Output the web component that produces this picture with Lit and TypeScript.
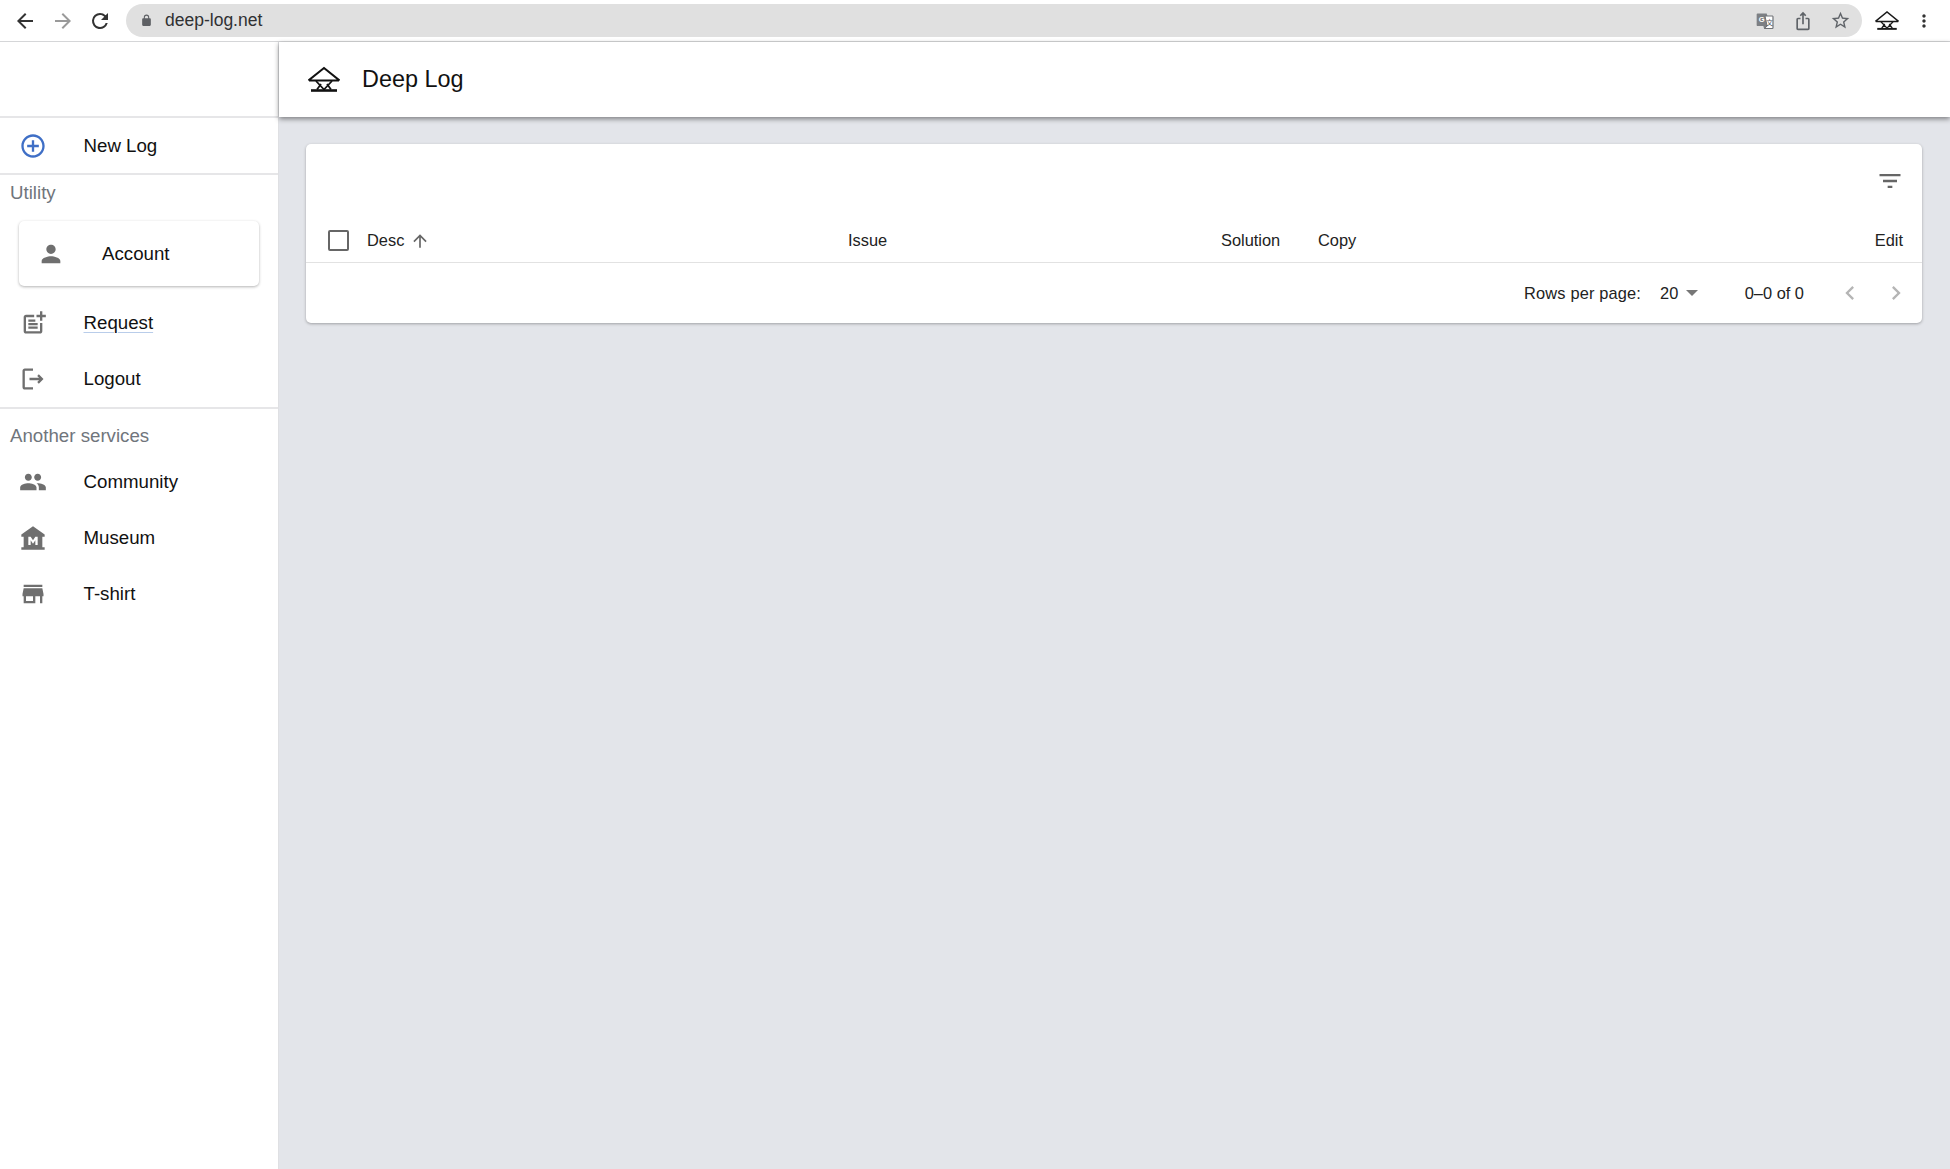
import { LitElement, html, css, svg } from "lit";
import { customElement } from "lit/decorators.js";

const logo = svg`<path d="M.5 17.500 L16 5 L31.500 17.500 M1 17.500 H31" fill="none" stroke="currentColor" stroke-width="2"/><path d="M8 18 L16 26.500 L24 18 M9 26.500 L13 21 M23 26.500 L19 21" fill="none" stroke="currentColor" stroke-width="1.800"/><path d="M3 27.500 H29" stroke="currentColor" stroke-width="2.600"/>`;

const ic = (body: unknown, size = 28, vb = "0 0 24 24") =>
  html`<svg width=${size} height=${size} viewBox=${vb} fill="currentColor">${body}</svg>`;

const icons = {
  plus: svg`<path d="M13 7h-2v4H7v2h4v4h2v-4h4v-2h-4V7zm-1-5C6.490 2 2 6.490 2 12s4.490 10 10 10 10-4.490 10-10S17.510 2 12 2zm0 18c-4.410 0-8-3.590-8-8s3.590-8 8-8 8 3.590 8 8-3.590 8-8 8z"/>`,
  person: svg`<path d="M12 12c2.210 0 4-1.790 4-4s-1.790-4-4-4-4 1.790-4 4 1.790 4 4 4zm0 2c-2.670 0-8 1.340-8 4v2h16v-2c0-2.660-5.330-4-8-4z"/>`,
  request: svg`<path d="M18 19H6V7h7V5H6c-1.100 0-2 .9-2 2v12c0 1.100.9 2 2 2h12c1.100 0 2-.9 2-2v-7h-2v7zM20 5V2h-2v3h-3v2h3v3h2V7h3V5h-3zM8 9h6v2H8V9zm0 3h8v2H8v-2zm0 3h8v2H8v-2z"/>`,
  logout: svg`<path d="M5 5h7V3H5c-1.100 0-2 .9-2 2v14c0 1.100.9 2 2 2h7v-2H5V5zm16 7-4-4-1.400 1.400 1.600 1.600H9v2h8.200l-1.600 1.600L17 16l4-4z"/>`,
  people: svg`<path d="M16 11c1.660 0 2.990-1.340 2.990-3S17.660 5 16 5s-3 1.340-3 3 1.340 3 3 3zm-8 0c1.660 0 2.990-1.340 2.990-3S9.660 5 8 5 5 6.340 5 8s1.340 3 3 3zm0 2c-2.330 0-7 1.170-7 3.500V19h14v-2.500C15 14.170 10.330 13 8 13zm8 0c-.29 0-.62.020-.97.050C16.190 13.890 17 15.020 17 16.500V19h6v-2.500c0-2.330-4.670-3.500-7-3.500z"/>`,
  museum: svg`<path fill-rule="evenodd" d="M22 11V9L12 2 2 9v2h2v9H2v2h20v-2h-2v-9h2zM16 18h-2v-4l-2 3-2-3v4H8v-7h2l2 3 2-3h2v7z"/>`,
  store: svg`<path fill-rule="evenodd" d="M20 4H4v2h16V4zm1 10v-2l-1-5H4l-1 5v2h1v6h10v-6h4v6h2v-6h1zm-9 4H6v-4h6v4z"/>`,
  sort: svg`<path d="M4 12l1.410 1.410L11 7.830V20h2V7.830l5.580 5.590L20 12l-8-8-8 8z"/>`,
  filter: svg`<path d="M10 18h4v-2h-4v2zM3 6v2h18V6H3zm3 7h12v-2H6v2z"/>`,
  left: svg`<path d="M15.410 7.410 14 6l-6 6 6 6 1.410-1.410L10.830 12z"/>`,
  right: svg`<path d="M10 6 8.590 7.410 13.170 12l-4.580 4.590L10 18l6-6z"/>`,
  back: svg`<path d="M20 11H7.830l5.590-5.590L12 4l-8 8 8 8 1.410-1.410L7.830 13H20v-2z"/>`,
  fwd: svg`<path d="M12 4l-1.410 1.410L16.170 11H4v2h12.170l-5.580 5.590L12 20l8-8z"/>`,
  reload: svg`<path d="M17.650 6.350A7.960 7.960 0 0 0 12 4a8 8 0 1 0 7.740 10h-2.080A6 6 0 1 1 12 6c1.660 0 3.140.69 4.220 1.780L13 11h7V4l-2.350 2.350z"/>`,
  lock: svg`<path d="M18 8h-1V6a5 5 0 0 0-10 0v2H6c-1.100 0-2 .9-2 2v10c0 1.100.9 2 2 2h12c1.100 0 2-.9 2-2V10c0-1.100-.9-2-2-2zM9 8V6a3 3 0 0 1 6 0v2H9z"/>`,
  share: svg`<path d="M16 5l-1.420 1.420-1.590-1.590V16h-1.980V4.830L9.420 6.420 8 5l4-4 4 4zm4 5v11c0 1.100-.9 2-2 2H6c-1.110 0-2-.9-2-2V10c0-1.110.89-2 2-2h3v2H6v11h12V10h-3V8h3c1.100 0 2 .89 2 2z"/>`,
  star: svg`<path d="M22 9.240l-7.190-.62L12 2 9.190 8.630 2 9.240l5.460 4.730L5.820 21 12 17.270 18.180 21l-1.630-7.030L22 9.240zM12 15.400l-3.760 2.270 1-4.280-3.320-2.880 4.380-.38L12 6.100l1.710 4.040 4.380.38-3.320 2.880 1 4.280L12 15.400z"/>`,
  dots: svg`<path d="M12 8c1.100 0 2-.9 2-2s-.9-2-2-2-2 .9-2 2 .9 2 2 2zm0 2c-1.100 0-2 .9-2 2s.9 2 2 2 2-.9 2-2-.9-2-2-2zm0 6c-1.100 0-2 .9-2 2s.9 2 2 2 2-.9 2-2-.9-2-2-2z"/>`,
  translate: svg`<path d="M3 3h11l1 3h5.500c.8 0 1.500.7 1.500 1.500V20c0 .8-.7 1.500-1.500 1.500H11L10 18H3c-.8 0-1-.6-1-1.200V4c0-.6.400-1 1-1z" fill="#7d8084"/><path d="M12 6h9.500v15H11.500L14.500 18z" fill="#fff" stroke="#6f7276" stroke-width="1.200"/><text x="8" y="13.500" font-size="9" font-weight="700" font-family="Liberation Sans" text-anchor="middle" fill="#fff">G</text><text x="17.500" y="17" font-size="8" font-family="Noto Sans CJK SC" text-anchor="middle" fill="#55585c">文</text>`,
};

@customElement("app-root")
export class AppRoot extends LitElement {
  static styles = css`
    :host { display: block; width: 1950px; height: 1169px; overflow: hidden; font-family: "Liberation Sans", Arial, sans-serif; background: #e3e5ea; color: #000; }
    svg { display: block; flex: none; }
    .browser { height: 41px; background: #fff; border-bottom: 1px solid #d5d6d8; display: flex; align-items: center; padding: 0 0 0 13px; }
    .nav { display: flex; align-items: center; gap: 13.500px; width: 113px; color: #333; }
    .nav .off { color: #9a9a9a; }
    .omni { width: 1736px; height: 33px; border-radius: 17px; background: #e0e0e0; display: flex; align-items: center; padding: 0 6px 0 14px; box-sizing: border-box; font-size: 17.500px; color: #303133; }
    .omni .lock { color: #5e6064; margin-right: 12px; }
    .omni .grow { flex: 1; }
    .omni .acts { display: flex; align-items: center; gap: 17.500px; color: #5f6368; margin-right: 5px; }
    .ext { display: flex; align-items: center; margin-left: 13px; gap: 15px; color: #1a1a1a; }
    .ext .dots { color: #333; }
    .main { display: flex; height: 1127px; }
    aside { width: 278px; flex: none; box-sizing: content-box; background: #fff; border-right: 1px solid #dfe0e3; }
    .top { height: 74px; border-bottom: 2px solid #e6e6e8; }
    .new { height: 55px; display: flex; align-items: center; padding-left: 19px; border-bottom: 2px solid #e6e6e8; font-size: 18.700px; color: #111; }
    .row { height: 56px; display: flex; align-items: center; padding-left: 19px; font-size: 18.700px; color: #111; }
    .new svg { color: #3f6fc6; }
    .row svg, .account svg { color: #6f6f6f; }
    .ico { width: 64.500px; flex: none; }
    .account .ico { width: 65px; }
    .sect { font-size: 18.700px; color: #70757c; padding-left: 10px; line-height: 36px; }
    .account { margin: 10px 19px 9px; height: 65px; border-radius: 5px; background: #fff; box-shadow: 0 1px 3px rgba(0,0,0,.3); display: flex; align-items: center; padding-left: 18px; font-size: 18.700px; color: #111; }
    .req { text-decoration: underline; text-decoration-color: #b9cdea; text-underline-offset: 3px; text-decoration-thickness: 1px; }
    .hr { height: 2px; background: #e6e6e8; }
    .another { padding-top: 8.500px; }
    .content { flex: 1; min-width: 0; display: flex; flex-direction: column; }
    header { height: 75px; background: #fff; display: flex; align-items: center; padding-left: 29px; font-size: 23.400px; color: #111; box-shadow: 0 2px 5px rgba(0,0,0,.45); position: relative; }
    header svg { margin-right: 22px; color: #111; }
    .card { margin: 27px 28px 0 27px; height: 179px; background: #fff; border-radius: 5px; box-shadow: 0 1px 3px rgba(0,0,0,.3); display: flex; flex-direction: column; font-size: 16.400px; color: #222; }
    .tool { flex: none; height: 74px; display: flex; justify-content: flex-end; align-items: center; padding-right: 18px; color: #666; }
    .thead { flex: none; height: 45px; padding-top: 1px; box-sizing: border-box; border-bottom: 1px solid #e2e2e2; display: grid; grid-template-columns: 61px 481px 373px 97px 1fr 60px; align-items: center; }
    .thead > div { display: flex; align-items: center; }
    .chk { width: 21px; height: 21px; border: 2px solid #666; border-radius: 2px; margin-left: 22px; box-sizing: border-box; }
    .desc svg { margin-left: 6px; color: #666; }
    .edit { justify-content: flex-end; padding-right: 19px; }
    .foot { flex: 1; display: flex; justify-content: flex-end; align-items: center; padding-right: 12px; }
    .foot .rows { letter-spacing: .150px; }
    .foot .n { margin-left: 19px; }
    .foot .caret { width: 0; height: 0; border-left: 6px solid transparent; border-right: 6px solid transparent; border-top: 6px solid #777; margin-left: 8px; }
    .foot .range { margin-left: 46.500px; margin-right: 32px; }
    .foot .pg { display: flex; gap: 18px; color: #b5b5b5; }
  `;

  private item(icon: unknown, label: string, cls = "") {
    return html`<div class="row"><div class="ico">${ic(icon, 28)}</div><span class=${cls}>${label}</span></div>`;
  }

  render() {
    return html`
      <div class="browser">
        <div class="nav">
          ${ic(icons.back, 24)}
          <span class="off">${ic(icons.fwd, 24)}</span>
          ${ic(icons.reload, 24)}
        </div>
        <div class="omni">
          <span class="lock">${ic(icons.lock, 13)}</span>
          <span>deep-log.net</span>
          <span class="grow"></span>
          <div class="acts">
            ${ic(icons.translate, 20)}
            ${ic(icons.share, 20)}
            ${ic(icons.star, 21)}
          </div>
        </div>
        <div class="ext">
          ${ic(logo, 24, "0 1 32 32")}
          <span class="dots">${ic(icons.dots, 20)}</span>
        </div>
      </div>
      <div class="main">
        <aside>
          <div class="top"></div>
          <div class="new"><div class="ico">${ic(icons.plus, 28)}</div><span>New Log</span></div>
          <div class="sect">Utility</div>
          <div class="account"><div class="ico">${ic(icons.person, 28)}</div><span>Account</span></div>
          ${this.item(icons.request, "Request", "req")}
          ${this.item(icons.logout, "Logout")}
          <div class="hr"></div>
          <div class="sect another">Another services</div>
          ${this.item(icons.people, "Community")}
          ${this.item(icons.museum, "Museum")}
          ${this.item(icons.store, "T-shirt")}
        </aside>
        <div class="content">
          <header>${ic(logo, 32, "0 1 32 32")}<span>Deep Log</span></header>
          <div class="card">
            <div class="tool">${ic(icons.filter, 28)}</div>
            <div class="thead">
              <div><div class="chk"></div></div>
              <div class="desc">Desc ${ic(icons.sort, 20)}</div>
              <div>Issue</div>
              <div>Solution</div>
              <div>Copy</div>
              <div class="edit">Edit</div>
            </div>
            <div class="foot">
              <span class="rows">Rows per page:</span>
              <span class="n">20</span><span class="caret"></span>
              <span class="range">0–0 of 0</span>
              <div class="pg">${ic(icons.left, 28)}${ic(icons.right, 28)}</div>
            </div>
          </div>
        </div>
      </div>
    `;
  }
}
